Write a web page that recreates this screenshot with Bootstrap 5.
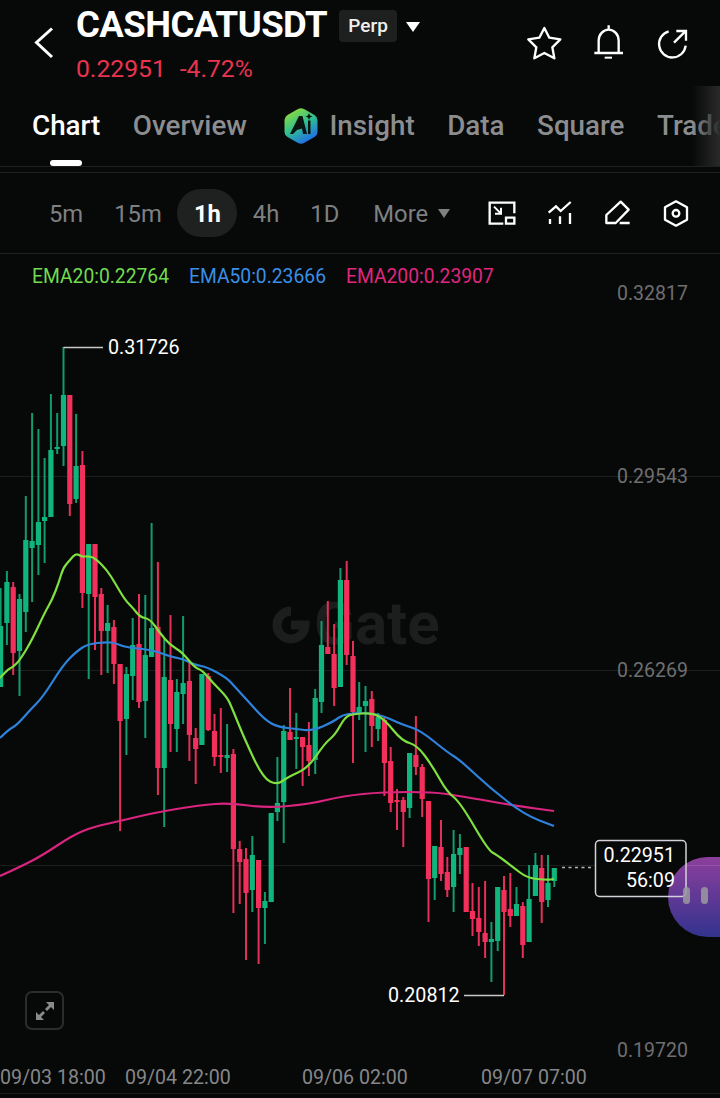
<!DOCTYPE html>
<html lang="en">
<head>
<meta charset="utf-8">
<title>CASHCATUSDT</title>
<link href="https://cdn.jsdelivr.net/npm/bootstrap@5.3.0/dist/css/bootstrap.min.css" rel="stylesheet">
<style>
html,body{background:#070808;margin:0}
body{width:720px;height:1098px;overflow:hidden;font-family:Roboto,"Liberation Sans",sans-serif;color:#fff}
.hdr{height:86px;padding:0 30px 0 34px}
.back-ic{width:20px;height:32px;margin-right:22px;margin-top:-1px}
.sym{font-size:36.5px;font-weight:700;line-height:50px;letter-spacing:-.55px;height:50px}
.perp{font-size:19px;font-weight:500;background:#1e1f1f;border-radius:4px;width:58px;height:32px;line-height:32px;text-align:center;margin:10px 9px 0 12px;color:#f0f0f0}
.caret-w{margin-top:22px}
.pxrow{font-size:24.7px;line-height:26px;color:#e8344f;height:36px;padding-top:6px}
.pxrow span+span{margin-left:14px}
.hdr-ic{gap:29px;margin-top:-2px}
.tabs-wrap{height:81px;overflow:hidden;position:relative;border-bottom:1px solid #1f2020}
.tabs-wrap::after{content:"";position:absolute;right:0;top:0;bottom:0;width:28px;background:linear-gradient(90deg,rgba(40,40,40,0),#2a2a2a)}
.tabnav{flex-wrap:nowrap;padding-left:32px;gap:32.5px;height:80px;white-space:nowrap}
.tablink{font-size:27.8px;font-weight:500;color:#8b8d8f;line-height:80px;padding:0;text-decoration:none;display:flex;align-items:center}
.tablink.on{color:#fff}
.tabbar{position:absolute;left:50px;top:74px;width:32px;height:6px;background:#fff;border-radius:3px}
.ins-ic{margin:0 11px 0 5px}
.tool{margin-top:5px;border-top:1px solid #1f2020;border-bottom:1px solid #1f2020;padding:0 29px 0 33.5px;height:82px}
.tf{font-size:23.8px;color:#7e8082;padding:0 15.5px;line-height:51px;height:48px;text-decoration:none}
.tf.on{background:#1f2020;color:#fff;font-weight:700;border-radius:24px;padding:0 16.5px}
.tf-more{margin-left:3px}
.more-c{margin-left:10px}
.tool-ic{gap:28px}
.chartbox{height:844px;position:relative}
.chartbox svg{display:block}
.lg{position:absolute;left:32px;top:10px;font-size:19.3px;line-height:26px;gap:20px}
.c-g{color:#72db4f}.c-b{color:#3a8fe6}.c-p{color:#e0267f}
.zoombtn{position:absolute;left:25px;top:737px;width:39px;height:39px;border:2px solid #2b2c2c;border-radius:7px;display:flex;align-items:center;justify-content:center}
</style>
</head>
<body>
<header class="hdr d-flex align-items-start">
  <svg class="back-ic align-self-center" viewBox="0 0 20 32" fill="none" stroke="#fff" stroke-width="3"><path d="M18 1.5 2.500 15.500 18 30"/></svg>
  <div class="flex-grow-1">
    <div class="d-flex">
      <div class="sym">CASHCATUSDT</div>
      <div class="perp">Perp</div>
      <svg class="caret-w" width="14" height="10" viewBox="0 0 14 10"><path d="M0 0H14L7 10Z" fill="#fff"/></svg>
    </div>
    <div class="pxrow"><span>0.22951</span><span>-4.72%</span></div>
  </div>
  <div class="hdr-ic d-flex align-self-center">
    <svg width="35" height="35" viewBox="50 43 105 105" fill="none" stroke="#fff" stroke-width="7" stroke-linejoin="round"><path d="M102 52 117 81 150 86 126 110 132 143 102 127 72 143 78 110 54 86 87 81Z"/></svg>
    <svg width="35" height="35" viewBox="242 43 105 105" fill="none" stroke="#fff" stroke-width="7"><path d="M265 127V90a30 33 0 0 1 60 0V127M252 127H338M295 44V57"/><path d="M283 141H305" stroke-width="6"/></svg>
    <svg width="35" height="35" viewBox="433 43 105 105" fill="none" stroke="#fff" stroke-width="7"><path d="M474 62A40 40 0 1 0 525 105M490 96 524 62M497 61H526V90"/></svg>
  </div>
</header>

<nav class="tabs-wrap">
  <ul class="nav tabnav">
    <li class="nav-item"><a class="tablink on" href="#">Chart</a></li>
    <li class="nav-item"><a class="tablink" href="#">Overview</a></li>
    <li class="nav-item"><a class="tablink" href="#">
      <svg class="ins-ic" width="34" height="38" viewBox="0 0 34 38">
        <defs><linearGradient id="hx" x1="0.1" y1="0.1" x2="0.6" y2="1"><stop offset="0" stop-color="#8fdc3c"/><stop offset=".5" stop-color="#2fc08f"/><stop offset="1" stop-color="#1f6fe8"/></linearGradient></defs>
        <path d="M14 2Q17 .5 20 2L30.500 8Q33.500 10 33.500 13V25Q33.500 28 30.500 30L20 36Q17 37.500 14 36L3.500 30Q.5 28 .5 25V13Q.5 10 3.500 8Z" fill="url(#hx)"/>
        <path d="M15 9H18.500L23 27H19L18 21.500 13 23 9 27H6Z" fill="#0a1512"/>
        <path d="M24 13.500H26.500V27H24Z" fill="#0a1512"/>
        <path d="M25 6 26 8.500 28.500 9.500 26 10.500 25 13 24 10.500 21.500 9.500 24 8.500Z" fill="#0a1512"/>
      </svg>Insight</a></li>
    <li class="nav-item"><a class="tablink" href="#">Data</a></li>
    <li class="nav-item"><a class="tablink" href="#">Square</a></li>
    <li class="nav-item"><a class="tablink" href="#">Trade</a></li>
  </ul>
  <div class="tabbar"></div>
</nav>

<section class="tool d-flex align-items-center">
  <a class="tf" href="#">5m</a>
  <a class="tf" href="#">15m</a>
  <a class="tf on" href="#">1h</a>
  <a class="tf" href="#">4h</a>
  <a class="tf" href="#">1D</a>
  <a class="tf tf-more pe-0" href="#">More</a>
  <svg class="more-c" width="12" height="9" viewBox="0 0 12 9"><path d="M0 0H12L6 9Z" fill="#7e8082"/></svg>
  <div class="tool-ic d-flex ms-auto">
    <svg width="30" height="30" viewBox="51 41 90 90" fill="none" stroke="#fff" stroke-width="7"><path d="M133 87V55H59V118H100"/><path d="M108 100H133V118H108Z"/><path d="M72 67 93 88M93 70V88H75" stroke-width="6"/></svg>
    <svg width="30" height="30" viewBox="225 41 90 90" fill="none" stroke="#fff" stroke-width="7"><path d="M236 85 258 66 272 80 302 53M240 104V119M270 96V119M300 86V119"/></svg>
    <svg width="30" height="30" viewBox="400 41 90 90" fill="none" stroke="#fff" stroke-width="7" stroke-linejoin="round"><path d="M410 116V92L453 52 477 76 438 116ZM450 116H480"/></svg>
    <svg width="30" height="30" viewBox="573 41 90 90" fill="none" stroke="#fff" stroke-width="7" stroke-linejoin="round"><path d="M618 51 651 69V106L618 124 585 106V69Z"/><circle cx="618" cy="87" r="10"/></svg>
  </div>
</section>

<main class="chartbox">
  <svg id="plot" width="720" height="844" viewBox="0 254 720 844" xmlns="http://www.w3.org/2000/svg"></svg>
  <div class="lg d-flex"><span class="c-g">EMA20:0.22764</span><span class="c-b">EMA50:0.23666</span><span class="c-p">EMA200:0.23907</span></div>
  <div class="zoombtn"><svg width="22" height="22" viewBox="0 0 22 22" fill="#8a8a8a"><path d="M12 2H20V10L17 7 13 11 11 9 15 5ZM10 20H2V12L5 15 9 11 11 13 7 17Z"/></svg></div>
</main>

<script>
var D=[
['g',588,626,687,687],['g',571,582,623,645],['r',582,587,653,675],['g',594,599,651,696],['g',496,540,612,632],
['g',413,541,548,602],['g',429,522,545,575],['g',458,517,521,563],['g',394,450,517,517],['g',413,447,449,454],
['g',347,395,446,466],['r',395,395,504,516],['g',414,466,499,503],['r',451,465,593,608],['g',544,544,594,679],
['r',544,544,597,650],['r',588,594,631,675],['g',605,623,631,673],['r',620,627,664,684],['r',664,664,721,831],
['g',667,674,719,755],['g',618,645,676,700],['r',594,644,702,708],['g',595,655,701,738],['g',523,628,657,657],
['r',562,627,768,795],['g',639,677,768,827],['r',615,680,724,752],['g',679,692,729,752],['g',616,683,694,724],
['r',663,681,735,761],['r',728,738,749,784],['g',674,674,745,745],['r',673,676,730,731],['r',714,731,757,766],
['r',708,755,757,773],['g',724,755,758,772],['r',749,754,849,913],['r',841,849,862,904],['r',848,859,893,960],
['g',836,855,890,912],['r',860,860,908,964],['g',892,901,908,944],['g',813,813,902,902],['g',757,803,812,821],
['g',725,731,802,843],['r',688,732,740,740],['g',713,737,739,769],['r',737,737,747,786],['r',722,745,761,776],
['g',689,698,760,774],['g',621,645,702,713],['r',601,647,654,654],['r',624,654,688,706],['g',568,580,687,687],
['r',561,580,655,665],['r',641,656,712,763],['g',682,707,713,720],['g',686,701,706,752],['r',691,699,726,747],
['g',713,717,729,741],['r',717,720,763,796],['r',747,761,803,812],['r',789,800,802,830],['r',797,800,812,847],
['g',753,753,808,818],['r',716,755,767,775],['r',764,767,799,817],['r',801,801,879,922],['g',846,846,878,900],
['r',820,847,874,881],['r',857,872,890,897],['g',830,854,887,912],['g',834,848,855,874],['r',847,847,912,912],
['r',883,911,919,936],['r',887,918,932,946],['r',881,933,942,958],['g',922,939,942,982],['g',887,887,941,951],
['r',876,890,912,995],['r',873,909,916,927],['g',887,904,916,916],['r',902,906,945,958],['g',865,899,942,942],
['g',853,865,896,896],['r',855,868,902,923],['g',855,883,900,907],['g',868,868,881,887]];
var EG=[[0,678],[7,670],[13,667],[20,660],[32,640],[45,612],[52,600],[59,582],[63,568],[70,560],[76,553],[82,557],[88,556],[95,558],[107,570],[115,583],[125,600],[133,608],[140,617],[150,619],[160,633],[170,645],[182,652],[195,668],[202,670],[213,683],[227,697],[232,708],[245,740],[263,778],[277,785],[288,777],[308,768],[325,743],[335,735],[345,717],[353,714],[373,713],[385,720],[402,741],[417,745],[433,767],[447,792],[460,802],[488,850],[497,855],[513,867],[527,878],[547,880],[554,879]];
var EB=[[0,738],[8,730],[17,725],[30,710],[43,697],[63,665],[77,651],[88,644],[107,642],[115,643],[125,647],[143,649],[155,651],[172,657],[183,659],[195,665],[207,667],[227,678],[235,687],[247,700],[265,720],[278,727],[297,729],[312,731],[333,722],[345,713],[377,713],[403,725],[420,730],[447,752],[460,760],[490,788],[525,815],[554,826]];
var EP=[[0,876],[20,867],[43,855],[73,835],[93,827],[120,821],[153,813],[200,805],[230,803],[267,808],[310,804],[343,796],[383,792],[433,792],[460,796],[517,806],[554,811]];
var s='';
function txt(x,y,t,c,fs,a,w){return '<text x="'+x+'" y="'+y+'" fill="'+c+'" font-size="'+fs+'" text-anchor="'+(a||'start')+'" font-weight="'+(w||400)+'" dominant-baseline="central" font-family="Roboto,Liberation Sans,sans-serif">'+t+'</text>';}
function pl(p,c){var d='M'+p[0].join(' ');for(var i=1;i<p.length-1;i++){d+=' Q'+p[i][0]+' '+p[i][1]+' '+((p[i][0]+p[i+1][0])/2)+' '+((p[i][1]+p[i+1][1])/2);}d+=' L'+p[p.length-1].join(' ');return '<path fill="none" stroke="'+c+'" stroke-width="2.200" stroke-linejoin="round" d="'+d+'"/>';}
[476,670].forEach(function(y){s+='<line x1="0" x2="720" y1="'+y+'.5" y2="'+y+'.5" stroke="#1c1d1d"/>';});
s+='<line x1="0" x2="595" y1="865.5" y2="865.5" stroke="#1c1d1d"/><line x1="0" x2="720" y1="1093.500" y2="1093.500" stroke="#1c1d1d"/>';
s+='<path d="M291 611A14 14 0 1 0 305 625H291" fill="none" stroke="#1c1d1d" stroke-width="9"/>';
s+=txt(314,623,'Gate','#1c1d1d',60,'start',700);
D.forEach(function(d,i){var x=0.6+6.292*i,cw=d[0]=='g'?'#129c6e':'#e42f59',cb=d[0]=='g'?'#0fb57c':'#f2305b';
 s+='<rect x="'+(x-1).toFixed(1)+'" y="'+d[1]+'" width="2" height="'+(d[4]-d[1])+'" fill="'+cw+'"/>';
 s+='<rect x="'+(x-2.6).toFixed(1)+'" y="'+d[2]+'" width="5.200" height="'+Math.max(d[3]-d[2],2)+'" fill="'+cb+'"/>';});
s+=pl(EP,'#d9257e')+pl(EB,'#2f82dc')+pl(EG,'#7fe03f');
s+='<path d="M63.500 347.500H103M464 995.500H504" stroke="#c8c8c8" stroke-width="1.500" fill="none"/>';
s+=txt(108,347,'0.31726','#fff',19.700)+txt(388,995,'0.20812','#fff',19.700);
[[293,'0.32817'],[476,'0.29543'],[670,'0.26269'],[1050,'0.19720']].forEach(function(p){s+=txt(617,p[0],p[1],'#6e6f70',19.500);});
[[0,'09/03 18:00'],[125,'09/04 22:00'],[302,'09/06 02:00'],[481,'09/07 07:00']].forEach(function(p){s+=txt(p[0],1077,p[1],'#868788',19.600);});
s+='<line x1="562" x2="594" y1="867.500" y2="867.500" stroke="#b5b5b5" stroke-width="1.500" stroke-dasharray="3 3.500"/>';
s+='<defs><linearGradient id="bb" x1="0" y1="0" x2="0" y2="1"><stop offset="0" stop-color="#8c3f9c"/><stop offset="1" stop-color="#33338e"/></linearGradient></defs>';
s+='<path d="M720 857H708A40 40 0 0 0 708 937H720Z" fill="url(#bb)"/>';
s+='<line x1="686" x2="720" y1="865.500" y2="865.500" stroke="#fff" stroke-opacity=".12"/>';
s+='<rect x="595.500" y="840.500" width="90.500" height="56" rx="4" fill="none" stroke="#d4d2d8" stroke-width="1.500"/>';
s+=txt(675,855,'0.22951','#fff',19.700,'end')+txt(675,880,'56:09','#fff',19.700,'end');
s+='<rect x="683" y="887" width="7" height="17" rx="3.500" fill="#9a9a9f" fill-opacity=".85"/><rect x="701" y="887" width="7" height="17" rx="3.500" fill="#9a9a9f" fill-opacity=".85"/>';
document.getElementById('plot').innerHTML=s;
</script>
<script src="https://cdn.jsdelivr.net/npm/bootstrap@5.3.0/dist/js/bootstrap.bundle.min.js"></script>
</body>
</html>
